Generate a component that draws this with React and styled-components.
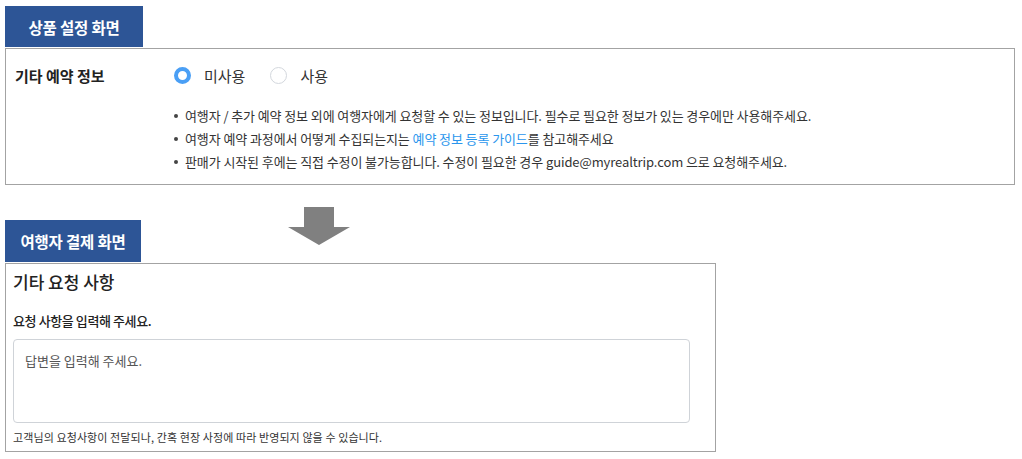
import styled, { createGlobalStyle } from 'styled-components';

const GlobalStyle = createGlobalStyle`
  body {
    margin: 0;
    background: #fff;
    font-family: "Noto Sans CJK KR", "Noto Sans", sans-serif;
    color: #333;
  }
`;

const Page = styled.div`
  width: 1010px;
  padding: 6px 0 0 5px;
`;

const Tab = styled.div`
  width: ${(p) => p.width}px;
  height: ${(p) => p.height}px;
  margin-top: ${(p) => p.offset || 0}px;
  background: #2d5596;
  color: #fff;
  font-size: 15.5px;
  font-weight: 700;
  letter-spacing: -0.2px;
  display: flex;
  align-items: center;
  justify-content: center;
  box-sizing: border-box;
`;

const Box = styled.div`
  box-sizing: border-box;
  border: 1px solid #a3a3a3;
  width: ${(p) => p.width}px;
  margin-top: 1px;
`;

const SettingBox = styled(Box)`
  padding: 15px 10px 11px 9px;
`;

const OptionRow = styled.div`
  display: flex;
  align-items: center;
  height: 22px;
`;

const Label = styled.div`
  width: 159px;
  font-size: 15px;
  font-weight: 700;
  color: #222;
`;

const RadioGroup = styled.div`
  display: flex;
  align-items: center;
  gap: 25px;
`;

const RadioOption = styled.label`
  display: flex;
  align-items: center;
  gap: 13px;
  font-size: 15px;
  color: #333;
`;

const RadioDot = styled.span`
  width: 17px;
  height: 17px;
  border-radius: 50%;
  box-sizing: border-box;
  background: #fff;
  border: ${(p) => (p.checked ? '4.5px solid #4a9ff5' : '1px solid #d3d7dd')};
`;

const Notes = styled.ul`
  list-style: none;
  margin: 18px 0 0 159px;
  padding: 0;
`;

const Note = styled.li`
  display: flex;
  align-items: center;
  height: 23px;
  font-size: 13px;
  letter-spacing: -0.1px;
  color: #333;

  &::before {
    content: '';
    width: 4px;
    height: 4px;
    border-radius: 50%;
    background: #444;
    margin-right: 7px;
  }
`;

const Link = styled.span`
  color: #2b96ed;
  white-space: pre;
`;

const ArrowRow = styled.div`
  display: flex;
  align-items: flex-start;
  margin-top: 22px;
`;

const ArrowIcon = styled.svg`
  margin-left: 147px;
  display: block;
`;

const RequestBox = styled(Box)`
  padding: 8px 25px 6px 7px;
`;

const Title = styled.div`
  font-size: 17px;
  font-weight: 500;
  color: #222;
  line-height: 20px;
`;

const Question = styled.div`
  margin-top: 19px;
  font-size: 13px;
  font-weight: 500;
  letter-spacing: -0.4px;
  color: #222;
`;

const AnswerArea = styled.div`
  margin-top: 9px;
  height: 84px;
  box-sizing: border-box;
  border: 1px solid #cfd3d8;
  border-radius: 4px;
  padding: 11px 11px;
  font-size: 13px;
  color: #555;
`;

const Hint = styled.div`
  margin-top: 6px;
  font-size: 11px;
  letter-spacing: 0.1px;
  color: #333;
`;

const App = () => {
  return (
    <Page>
      <GlobalStyle />
      <Tab width={138} height={41}>상품 설정 화면</Tab>
      <SettingBox width={1010}>
        <OptionRow>
          <Label>기타 예약 정보</Label>
          <RadioGroup>
            <RadioOption>
              <RadioDot checked />
              미사용
            </RadioOption>
            <RadioOption>
              <RadioDot />
              사용
            </RadioOption>
          </RadioGroup>
        </OptionRow>
        <Notes>
          <Note>여행자 / 추가 예약 정보 외에 여행자에게 요청할 수 있는 정보입니다. 필수로 필요한 정보가 있는 경우에만 사용해주세요.</Note>
          <Note>
            여행자 예약 과정에서 어떻게 수집되는지는&nbsp;<Link>예약 정보 등록 가이드</Link>를 참고해주세요
          </Note>
          <Note>판매가 시작된 후에는 직접 수정이 불가능합니다. 수정이 필요한 경우 guide@myrealtrip.com 으로 요청해주세요.</Note>
        </Notes>
      </SettingBox>
      <ArrowRow>
        <Tab width={136} height={42} offset={13}>여행자 결제 화면</Tab>
        <ArrowIcon width="62" height="38" viewBox="0 0 62 38">
          <polygon points="16,0 46,0 46,20 62,20 31,38 0,20 16,20" fill="#808080" />
        </ArrowIcon>
      </ArrowRow>
      <RequestBox width={711}>
        <Title>기타 요청 사항</Title>
        <Question>요청 사항을 입력해 주세요.</Question>
        <AnswerArea>답변을 입력해 주세요.</AnswerArea>
        <Hint>고객님의 요청사항이 전달되나, 간혹 현장 사정에 따라 반영되지 않을 수 있습니다.</Hint>
      </RequestBox>
    </Page>
  );
};

export default App;
